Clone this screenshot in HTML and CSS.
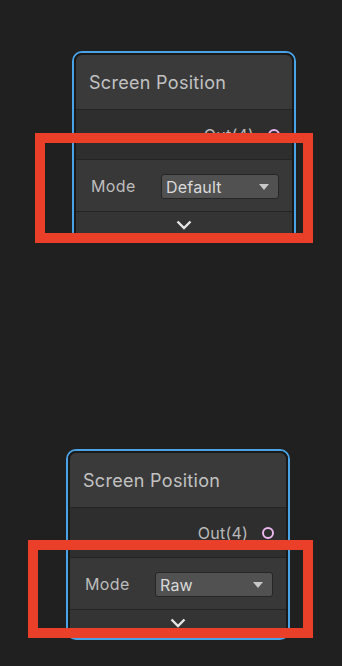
FILE: index.html
```html
<!DOCTYPE html>
<html lang="en">
<head>
    <meta charset="UTF-8">
    <meta name="viewport" content="width=device-width, initial-scale=1.0">
    <title>Screen Position Node</title>
    <link rel="stylesheet" href="styles.css">
</head>
<body>
    <div class="graph">
        <div class="node node-default">
            <div class="node-body">
                <div class="node-title">Screen Position</div>
                <div class="node-ports">
                    <span class="port-label">Out(4)</span>
                    <span class="port-dot"></span>
                </div>
                <div class="node-settings">
                    <span class="setting-label">Mode</span>
                    <div class="dropdown">
                        <span>Default</span>
                        <span class="caret"></span>
                    </div>
                </div>
                <div class="node-expand">
                    <svg width="16" height="10" viewBox="0 0 16 10"><path d="M1.5 1.5 L8 8 L14.5 1.5" fill="none" stroke="#e6e6e6" stroke-width="2.4"/></svg>
                </div>
            </div>
            <div class="highlight"></div>
        </div>

        <div class="node node-raw">
            <div class="node-body">
                <div class="node-title">Screen Position</div>
                <div class="node-ports">
                    <span class="port-label">Out(4)</span>
                    <span class="port-dot"></span>
                </div>
                <div class="node-settings">
                    <span class="setting-label">Mode</span>
                    <div class="dropdown">
                        <span>Raw</span>
                        <span class="caret"></span>
                    </div>
                </div>
                <div class="node-expand">
                    <svg width="16" height="10" viewBox="0 0 16 10"><path d="M1.5 1.5 L8 8 L14.5 1.5" fill="none" stroke="#e6e6e6" stroke-width="2.4"/></svg>
                </div>
            </div>
            <div class="highlight"></div>
        </div>
    </div>
</body>
</html>
```

FILE: styles.css
```css
body {
    margin: 0;
    height: 666px;
    overflow: hidden;
    background-color: #202020;
    font-family: "Inter", "Noto Sans", sans-serif;
}

.graph {
    display: flex;
    flex-direction: column;
}

.node {
    position: relative;
    box-sizing: border-box;
    width: 224px;
    border: 2px solid #4aa3e6;
    border-radius: 10px;
}

.node-default {
    margin: 51px 0 0 72px;
}

.node-raw {
    margin: 207px 0 0 66px;
}

.node-body {
    border: 2px solid #1a1a1a;
    border-radius: 8px;
    overflow: hidden;
}

.node-title {
    display: flex;
    align-items: center;
    height: 54px;
    padding-left: 13px;
    background-color: #3a3a3a;
    color: #c2c2c2;
    font-size: 18px;
    letter-spacing: 0.3px;
    border-bottom: 1px solid #242424;
}

.node-ports {
    display: flex;
    justify-content: flex-end;
    align-items: center;
    height: 49px;
    padding-right: 12px;
    background-color: #2e2e2e;
    border-bottom: 1px solid #242424;
}

.port-label {
    color: #bababa;
    font-size: 16px;
    letter-spacing: 0.2px;
    margin-right: 14px;
}

.port-dot {
    box-sizing: border-box;
    width: 12px;
    height: 12px;
    border: 2px solid #ecb6ee;
    border-radius: 50%;
}

.node-settings {
    display: flex;
    align-items: center;
    height: 51px;
    padding-left: 15px;
    background-color: #383838;
    border-bottom: 1px solid #242424;
}

.setting-label {
    width: 70px;
    color: #bdbdbd;
    font-size: 16px;
    letter-spacing: 0.4px;
}

.dropdown {
    box-sizing: border-box;
    display: flex;
    justify-content: space-between;
    align-items: center;
    width: 118px;
    height: 25px;
    margin-top: 2px;
    padding: 0 9px 0 4px;
    background-color: #515151;
    border: 1px solid #262626;
    border-radius: 3px;
    color: #dadada;
    font-size: 16px;
    letter-spacing: 0.2px;
}

.caret {
    width: 0;
    height: 0;
    border-left: 5px solid transparent;
    border-right: 5px solid transparent;
    border-top: 6px solid #c8c8c8;
}

.node-expand {
    display: flex;
    justify-content: center;
    align-items: center;
    height: 26px;
    background-color: #343434;
}

.node-expand svg {
    display: block;
}

/* red annotation frames over the settings row */
.highlight {
    position: absolute;
    box-sizing: border-box;
    border: 10px solid #ea3f28;
}

.node-default .highlight {
    left: -39px;
    top: 80px;
    width: 278px;
    height: 110px;
}

.node-raw .highlight {
    left: -40px;
    top: 89px;
    width: 285px;
    height: 98px;
}
```
